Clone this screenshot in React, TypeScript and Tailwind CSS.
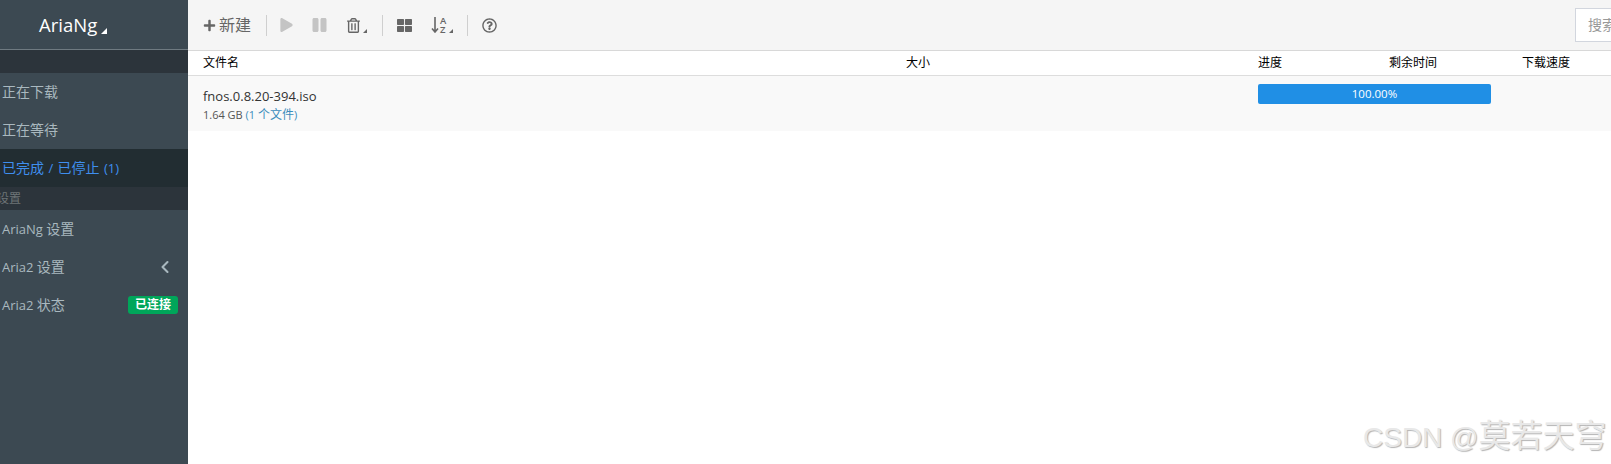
import { ChevronLeft } from "lucide-react";
import { FaPlus, FaPlay, FaPause, FaRegTrashAlt, FaThLarge, FaRegQuestionCircle } from "react-icons/fa";

function T({ text, className }: { text: string; className: string }) {
  return (
    <>
      {text.split(/([\u4e00-\u9fff]+)/).map((part, i) =>
        i % 2 === 1 ? <span key={i} className={className}>{part}</span> : part
      )}
    </>
  );
}

function Caret() {
  return <span className="ml-[3px] mt-[12px] h-0 w-0 border-b-[4px] border-l-[4px] border-b-current border-l-transparent" />;
}

function Item({ label, active, children }: { label: string; active?: boolean; children?: React.ReactNode }) {
  return (
    <div className={`flex h-[38px] items-center justify-between pl-[2px] text-[13px] ${active ? "bg-[#222d32] text-[#3f8fef] [word-spacing:1px]" : "text-[#a9b8bf]"}`}>
      <span><T text={label} className="text-[14px]" /></span>
      {children}
    </div>
  );
}

function Sep() {
  return <span className="h-[21px] w-px shrink-0 bg-[#cfcfcf]" />;
}

export default function App() {
  return (
    <div className="relative flex h-[464px] w-[1611px] overflow-hidden bg-white text-[#333]" style={{ fontFamily: '"Open Sans", "Noto Sans CJK SC", sans-serif' }}>
      <aside className="flex w-[188px] shrink-0 flex-col bg-[#3c4952]">
        <div className="flex h-[50px] items-center border-b border-[#6f7a81] pl-[39px] text-[18.5px] text-white">
          AriaNg
          <span className="ml-[4px] mt-[13px] h-0 w-0 border-b-[6px] border-l-[6px] border-b-white border-l-transparent" />
        </div>
        <div className="h-[23px] bg-[#2c343b]" />
        <Item label="正在下载" />
        <Item label="正在等待" />
        <Item label="已完成 / 已停止 (1)" active />
        <div className="flex h-[23px] items-center overflow-hidden bg-[#2c343b] pl-0 text-[#6e7477]">
          <span className="-ml-[3px] text-[12px]">设置</span>
        </div>
        <Item label="AriaNg 设置" />
        <Item label="Aria2 设置">
          <ChevronLeft className="mr-[13px] h-[20px] w-[20px]" strokeWidth={2.5} />
        </Item>
        <Item label="Aria2 状态">
          <span className="mr-[10px] flex h-[18px] w-[50px] items-center justify-center rounded-[3px] bg-[#00a65a] text-[12px] font-bold text-white">已连接</span>
        </Item>
      </aside>

      <main className="flex min-w-0 flex-1 flex-col">
        <div className="flex h-[51px] shrink-0 items-center border-b border-[#d8d8d8] bg-[#f5f5f5] pl-[15px] text-[#666]">
          <FaPlus className="h-[13px] w-[13px]" />
          <span className="ml-[3px] text-[16px]">新建</span>
          <span className="ml-[15px] flex"><Sep /></span>
          <FaPlay className="ml-[13px] h-[14px] w-[13px] text-[#c4c4c4]" />
          <FaPause className="ml-[19px] h-[16px] w-[15px] text-[#c4c4c4]" />
          <span className="ml-[20px] flex items-center">
            <FaRegTrashAlt className="h-[15px] w-[13px]" />
            <Caret />
          </span>
          <span className="ml-[15px] flex"><Sep /></span>
          <FaThLarge className="ml-[14px] h-[15px] w-[15px]" />
          <span className="ml-[19px] flex items-center">
            <svg width="8" height="16" viewBox="0 0 8 16" fill="none" stroke="#666" strokeWidth="1.6">
              <path d="M4 0v15M1 11.5 4 15l3-3.5" />
            </svg>
            <span className="ml-[1px] flex flex-col text-[9.5px] font-semibold leading-[9px]">
              <span>A</span>
              <span>Z</span>
            </span>
            <Caret />
          </span>
          <span className="ml-[14px] flex"><Sep /></span>
          <FaRegQuestionCircle className="ml-[14px] h-[15px] w-[15px]" />
          <div className="ml-auto h-[34px] w-[36px] overflow-hidden whitespace-nowrap border border-r-0 border-[#d2d6de] bg-white pl-[12px] text-[14px] leading-[32px] text-[#999]">搜索</div>
        </div>

        <div className="grid h-[25px] shrink-0 grid-cols-[703px_352px_131px_133px_1fr] items-center border-b border-[#ddd] pl-[15px] text-[12px] text-black">
          <span>文件名</span>
          <span>大小</span>
          <span>进度</span>
          <span>剩余时间</span>
          <span>下载速度</span>
        </div>

        <div className="grid h-[55px] shrink-0 grid-cols-[1055px_233px] bg-[#f9f9f9] pl-[15px] pt-[8px]">
          <div className="pt-[2px]">
            <div className="text-[13px] leading-[20px]">fnos.0.8.20-394.iso</div>
            <div className="text-[11px] leading-[17px] text-[#555]">
              1.64 GB <span className="text-[#3c8dbc]"><T text="(1 个文件)" className="text-[12px]" /></span>
            </div>
          </div>
          <div className="flex h-[20px] items-center justify-center rounded-[2px] bg-[#208fe5] text-[11.5px] text-white">100.00%</div>
        </div>
      </main>

      <div className="absolute left-[1363px] top-[417px] whitespace-nowrap text-[28px] leading-[38px] text-[#e8e8e8] [text-shadow:1px_1px_1px_#b4b4b4]" style={{ fontFamily: '"Liberation Sans", "Noto Sans CJK SC", sans-serif' }}>
        CSDN @<span className="text-[32px]">莫若天穹</span>
      </div>
    </div>
  );
}
